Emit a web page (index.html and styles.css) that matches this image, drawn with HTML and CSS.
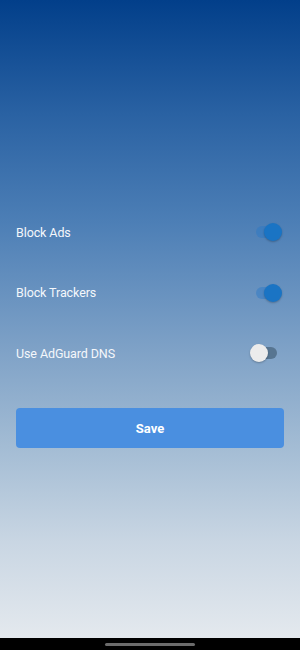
FILE: index.html
```html
<!DOCTYPE html>
<html>
<head>
<meta charset="utf-8">
<link rel="stylesheet" href="styles.css">
</head>
<body>
<div class="screen">
  <main class="content">
    <div class="row">
      <span class="label">Block Ads</span>
      <span class="switch on"><span class="track"></span><span class="thumb"></span></span>
    </div>
    <div class="row">
      <span class="label">Block Trackers</span>
      <span class="switch on"><span class="track"></span><span class="thumb"></span></span>
    </div>
    <div class="row">
      <span class="label">Use AdGuard DNS</span>
      <span class="switch off"><span class="track"></span><span class="thumb"></span></span>
    </div>
    <button class="save">Save</button>
  </main>
  <div class="navbar"><span class="pill"></span></div>
</div>
</body>
</html>
```
FILE: styles.css
```css
html, body {
  margin: 0;
  padding: 0;
  width: 300px;
  height: 650px;
  overflow: hidden;
  font-family: Roboto, "Noto Sans", sans-serif;
}
.screen {
  display: flex;
  flex-direction: column;
  height: 650px;
}
.content {
  flex: 1;
  background: linear-gradient(to bottom, #023f8a 0%, #2a62a3 18%, #4d7fb6 35%, #7fa2c7 55%, #a3bcd4 70%, #c9d6e3 85%, #e4e9ee 100%);
  padding: 202px 16px 0 16px;
  display: flex;
  flex-direction: column;
}
.row {
  height: 60.5px;
  display: flex;
  align-items: center;
  justify-content: space-between;
}
.label {
  color: #f4f7fb;
  font-size: 12.5px;
  letter-spacing: -0.1px;
}
.switch {
  position: relative;
  width: 32px;
  height: 20px;
  margin-right: 2px;
}
.switch .track {
  position: absolute;
  left: 4px;
  right: 5px;
  top: 4px;
  height: 12px;
  border-radius: 6px;
}
.switch .thumb {
  position: absolute;
  top: 1px;
  width: 18px;
  height: 18px;
  border-radius: 50%;
  box-shadow: 0 1px 2px rgba(0,0,0,0.25);
}
.switch.on .track { background: rgba(40, 120, 200, 0.45); left: 6px; right: 4px; }
.switch.on .thumb { right: 0; background: #1a74c4; }
.switch.off .track { background: #577591; }
.switch.off .thumb { left: 0; background: #ececec; }
.save {
  margin-top: 24.5px;
  height: 40px;
  border: none;
  border-radius: 4px;
  background: #4a8fe0;
  color: #fff;
  font-family: Roboto, "Noto Sans", sans-serif;
  font-weight: bold;
  font-size: 13px;
  padding: 0;
}
.navbar {
  height: 12px;
  background: #000;
  display: flex;
  justify-content: center;
  align-items: flex-start;
}
.pill {
  margin-top: 5px;
  width: 90px;
  height: 3px;
  border-radius: 2px;
  background: #6b6b6b;
}
```
